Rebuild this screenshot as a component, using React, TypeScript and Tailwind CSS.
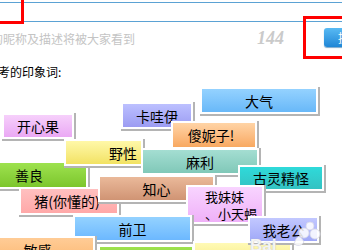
import React from 'react'

type Tag = {
  label: React.ReactNode
  box: string
  fill: string
  text?: string
}

// impression-word cloud: each word sits at its own spot on the canvas
const tags: Tag[] = [
  { label: '善良', box: 'left-[-30px] top-[81px] w-[118px] h-[28px]', fill: 'from-[#9ee24e] to-[#7cc62c]' },
  { label: '开心果', box: 'left-[2px] top-[33px] w-[72px] h-[26px]', fill: 'from-[#f6d0fb] to-[#eaa8f4]' },
  { label: '卡哇伊', box: 'left-[121px] top-[22px] w-[72px] h-[27px]', fill: 'from-[#bcc0ff] to-[#9c9cf2]' },
  { label: '大气', box: 'left-[200px] top-[7px] w-[118px] h-[27px]', fill: 'from-[#94d2ff] to-[#68b8f8]' },
  { label: '野性', box: 'left-[64px] top-[59px] w-[79px] h-[27px]', fill: 'from-[#fff8a8] to-[#f2e262]', text: 'justify-end pr-[4px]' },
  { label: '傻妮子!', box: 'left-[171px] top-[41px] w-[86px] h-[28px]', fill: 'from-[#ffd4a6] to-[#f8a860]', text: 'pr-[6px]' },
  { label: '麻利', box: 'left-[141px] top-[68px] w-[118px] h-[27px]', fill: 'from-[#a4ded2] to-[#80c8b8]' },
  { label: '古灵精怪', box: 'left-[238px] top-[85px] w-[86px] h-[26px]', fill: 'from-[#2edada] to-[#34c2c2]' },
  { label: '猪(你懂的)', box: 'left-[19px] top-[107px] w-[100px] h-[28px]', fill: 'from-[#ffc0c0] to-[#ffa8a8]', text: 'pr-[4px]' },
  { label: '知心', box: 'left-[98px] top-[95px] w-[117px] h-[27px]', fill: 'from-[#eab99a] to-[#d09474]' },
  {
    label: (
      <span className="block text-left pl-[12px] pt-[1px] text-[13px] leading-[17px]">
        我妹妹
        <br />
        、小天蝎
      </span>
    ),
    box: 'left-[186px] top-[105px] w-[78px] h-[39px]',
    fill: 'from-[#f8d4ff] to-[#efb0f8]',
    text: 'items-start',
  },
  { label: '前卫', box: 'left-[73px] top-[135px] w-[119px] h-[27px]', fill: 'from-[#94d2ff] to-[#6cb8ff]' },
  { label: '敏感', box: 'left-[-20px] top-[156px] w-[115px] h-[28px]', fill: 'from-[#ffcc96] to-[#fbb872]' },
  { label: '', box: 'left-[98px] top-[165px] w-[96px] h-[28px]', fill: 'from-[#9ee24e] to-[#7cc62c]' },
  { label: '', box: 'left-[193px] top-[161px] w-[99px] h-[28px]', fill: 'from-[#fffab6] to-[#f6e878]' },
  { label: '我老公', box: 'left-[248px] top-[136px] w-[71px] h-[27px]', fill: 'from-[#c2c8ff] to-[#a0a8f8]' },
]

function TagBox({ tag }: { tag: Tag }) {
  return (
    <div
      className={`absolute ${tag.box} border-2 border-white shadow-[1px_1px_0_1px_#b4b4b4] overflow-hidden`}
    >
      <div
        className={`h-full w-full bg-linear-to-b ${tag.fill} flex items-center justify-center text-[14px] leading-none text-black ${tag.text ?? ''}`}
      >
        {tag.label}
      </div>
    </div>
  )
}

export default function App() {
  return (
    <div className="relative w-[342px] h-[250px] overflow-hidden bg-white font-['Noto_Sans_CJK_SC',sans-serif]">
      {/* nickname input */}
      <div className="mt-[2px] ml-[-10px] w-[400px] h-[20px] border-y border-[#5ba2d4]" />

      {/* counter row */}
      <div className="flex items-start h-[38px]">
        <span className="ml-[-9px] mt-[9px] w-[266px] shrink-0 whitespace-nowrap text-[12px] leading-[16px] text-[#c4c4c4]">
          的昵称及描述将被大家看到
        </span>
        <span className="mt-[6px] font-['Liberation_Serif',serif] italic font-bold text-[18px] leading-[20px] text-[#cacaca]">
          144
        </span>
        <button className="ml-[40px] mt-[6px] shrink-0 w-[36px] h-[19px] rounded-[3px] bg-linear-to-b from-[#58baf3] to-[#1d86d6] shadow-[0_1px_1px_#7aa8cc] text-left pl-[14px] text-[12px] leading-[19px] text-white whitespace-nowrap">
          提交
        </button>
      </div>

      <div className="mt-[4px] ml-[-14px] h-[16px] whitespace-nowrap text-[12px] leading-[16px] text-black">
        参考的印象词:
      </div>

      {/* tag cloud */}
      <div className="relative h-[170px]">
        {tags.map((t, i) => (
          <TagBox key={i} tag={t} />
        ))}

        {/* faint watermark */}
        <svg className="absolute left-[282px] top-[140px]" width="42" height="30" viewBox="0 0 42 30">
          <g fill="#ffffff" fillOpacity="0.85" stroke="#d8d8e8" strokeWidth="0.8">
            <circle cx="22" cy="13" r="5" />
            <circle cx="33" cy="14" r="5" />
            <circle cx="28" cy="6" r="4" />
            <path d="M12 24 Q16 10 22 22 Q18 28 12 24 Z" />
          </g>
        </svg>
        <span className="absolute left-[250px] top-[157px] font-['Liberation_Sans',sans-serif] font-bold text-[17px] leading-none text-[#f4f4f4] [text-shadow:0_0_1px_#b8b8b8]">
          Bai
        </span>
      </div>

      {/* highlight annotations */}
      <div className="absolute left-[-10px] top-[-10px] w-[34px] h-[34px] border-[3px] border-[#ff0000]" />
      <div className="absolute left-[303px] top-[16px] w-[60px] h-[43px] border-[3px] border-[#ff0000]" />
    </div>
  )
}
